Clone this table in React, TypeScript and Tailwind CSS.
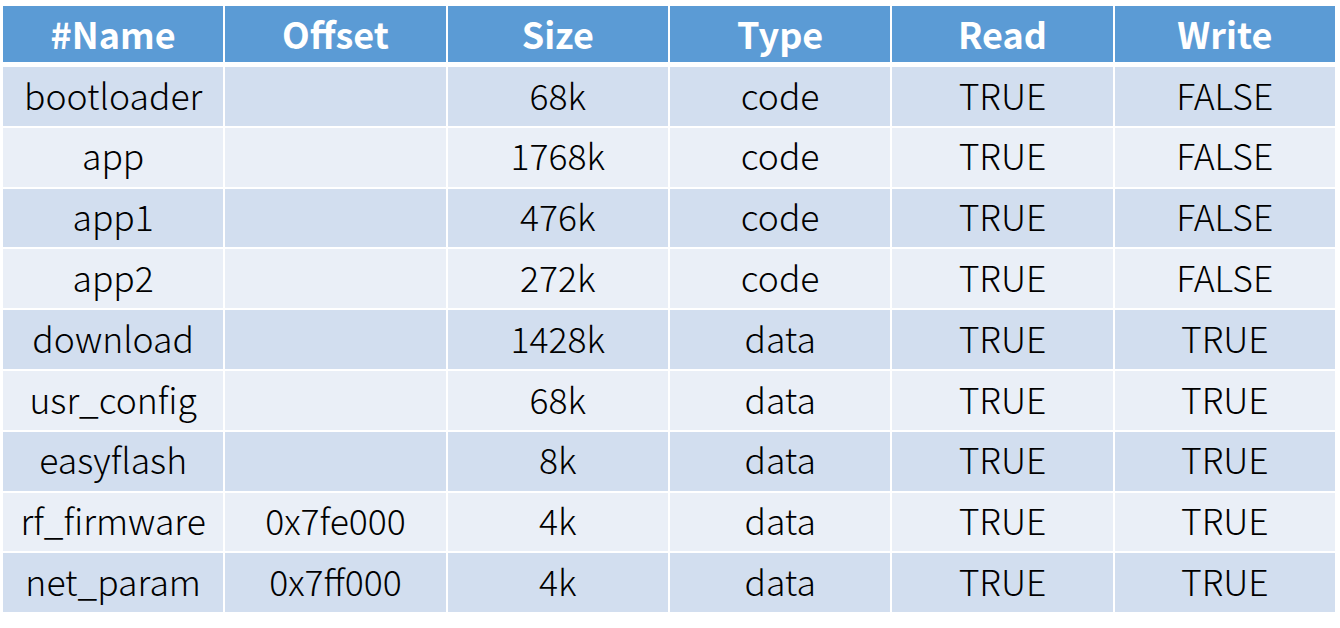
const headers = ["#Name", "Offset", "Size", "Type", "Read", "Write"];

const rows: string[][] = [
  ["bootloader", "", "68k", "code", "TRUE", "FALSE"],
  ["app", "", "1768k", "code", "TRUE", "FALSE"],
  ["app1", "", "476k", "code", "TRUE", "FALSE"],
  ["app2", "", "272k", "code", "TRUE", "FALSE"],
  ["download", "", "1428k", "data", "TRUE", "TRUE"],
  ["usr_config", "", "68k", "data", "TRUE", "TRUE"],
  ["easyflash", "", "8k", "data", "TRUE", "TRUE"],
  ["rf_firmware", "0x7fe000", "4k", "data", "TRUE", "TRUE"],
  ["net_param", "0x7ff000", "4k", "data", "TRUE", "TRUE"],
];

export default function App() {
  return (
    <div
      className="w-[1340px] h-[628px] bg-white pl-[3px] pt-[6px]"
      style={{ fontFamily: '"Noto Sans CJK SC", "Noto Sans", sans-serif' }}
    >
      <div className="w-[1332px]">
        {/* header */}
        <div className="grid grid-cols-6 gap-[2px] mb-[5px]">
          {headers.map((h) => (
            <div
              key={h}
              className="h-[56px] pb-[3px] bg-[#5b9bd5] text-white font-bold text-[36px] leading-none flex items-center justify-center"
            >
              {h}
            </div>
          ))}
        </div>
        {/* body */}
        <div className="flex flex-col gap-[2px]">
          {rows.map((r, i) => (
            <div key={i} className="grid grid-cols-6 gap-[2px]">
              {r.map((c, j) => (
                <div
                  key={j}
                  className={`h-[58.8px] pb-[4px] text-[35.5px] leading-none font-light text-black flex items-center justify-center ${
                    i % 2 === 0 ? "bg-[#d2deef]" : "bg-[#eaeff7]"
                  }`}
                >
                  {c}
                </div>
              ))}
            </div>
          ))}
        </div>
      </div>
    </div>
  );
}
